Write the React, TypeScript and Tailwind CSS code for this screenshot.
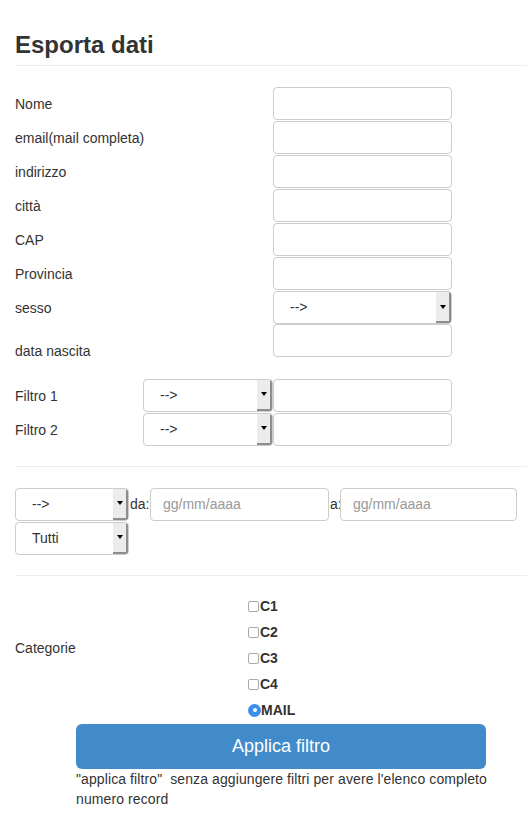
import React from "react";

const FIELDS = ["Nome", "email(mail completa)", "indirizzo", "città", "CAP", "Provincia"];
const CATEGORIES = ["C1", "C2", "C3", "C4"];

function FakeSelect({ label, className }: { label: string; className: string }) {
  return (
    <div
      className={`flex h-[33px] items-stretch justify-between overflow-hidden rounded-[4px] border border-[#ccc] bg-white ${className}`}
    >
      <span className="flex items-center pl-4 text-[14px] text-[#333]">{label}</span>
      <span className="flex w-[15px] items-center justify-center border-r-2 border-b-2 border-[#8d8d8d] bg-[#ececec]">
        <span className="h-0 w-0 border-l-[3px] border-r-[3px] border-t-[4px] border-l-transparent border-r-transparent border-t-black" />
      </span>
    </div>
  );
}

function TextBox({ className, placeholder }: { className: string; placeholder?: string }) {
  return (
    <div
      className={`flex h-[33px] items-center rounded-[4px] border border-[#ccc] bg-white pl-3 text-[14px] text-[#999] ${className}`}
    >
      {placeholder}
    </div>
  );
}

export default function App() {
  return (
    <div
      className="min-h-[829px] bg-white pl-[15px] text-[14px] text-[#333]"
      style={{ fontFamily: "'Liberation Sans', Arial, sans-serif" }}
    >
      <h1 className="pt-[32px] text-[24px] font-bold leading-[26px] text-[#333]">Esporta dati</h1>
      <hr className="mt-[7px] border-t border-[#eee]" />

      <div className="mt-[20px] flex flex-col">
        {FIELDS.map((f) => (
          <div key={f} className="flex h-[34px] items-center pt-[1px]">
            <span className="w-[258px] pt-[2px]">{f}</span>
            <TextBox className="w-[179px]" />
          </div>
        ))}
        <div className="flex h-[34px] items-center pt-[1px]">
          <span className="w-[258px] pt-[2px]">sesso</span>
          <FakeSelect label="-->" className="w-[179px]" />
        </div>
        <div className="flex h-[34px] items-start">
          <span className="w-[258px] pt-[17px] leading-[20px]">data nascita</span>
          <TextBox className="w-[179px]" />
        </div>
      </div>

      <div className="mt-[20px] flex flex-col">
        {["Filtro 1", "Filtro 2"].map((f) => (
          <div key={f} className="flex h-[34px] items-center">
            <span className="w-[128px] pt-[2px]">{f}</span>
            <FakeSelect label="-->" className="w-[130px]" />
            <TextBox className="w-[179px]" />
          </div>
        ))}
      </div>

      <hr className="mt-[20px] border-t border-[#eee]" />

      <div className="mt-[20px] flex flex-col">
        <div className="flex h-[34px] items-center">
          <FakeSelect label="-->" className="w-[114px]" />
          <span className="w-[21px] pl-[1px]">da:</span>
          <TextBox className="w-[179px]" placeholder="gg/mm/aaaa" />
          <span className="w-[11px] pl-[1px]">a:</span>
          <TextBox className="w-[177px]" placeholder="gg/mm/aaaa" />
        </div>
        <div className="flex h-[34px] items-center">
          <FakeSelect label="Tutti" className="w-[114px]" />
        </div>
      </div>

      <hr className="mt-[20px] border-t border-[#eee]" />

      <div className="mt-[17px] flex">
        <span className="w-[233px] pt-[45px] leading-[20px]">Categorie</span>
        <div className="flex flex-col">
          {CATEGORIES.map((c) => (
            <div key={c} className="flex h-[26px] items-center">
              <span className="mr-[1px] h-[11px] w-[11px] rounded-[2px] border border-[#a9a9a9] bg-white" />
              <span className="font-bold">{c}</span>
            </div>
          ))}
          <div className="flex h-[26px] items-center">
            <span className="flex h-[13px] w-[13px] items-center justify-center rounded-full bg-[#3b8eea]">
              <span className="h-[4px] w-[4px] rounded-full bg-white" />
            </span>
            <span className="font-bold">MAIL</span>
          </div>
        </div>
      </div>

      <div className="ml-[61px] w-[420px]">
        <button className="mt-[1px] flex h-[45px] w-[410px] items-center justify-center rounded-[6px] bg-[#428bca] text-[18px] text-white">
          Applica filtro
        </button>
        <p className="leading-[20px] tracking-[0.1px]">
          "applica filtro"&nbsp; senza aggiungere filtri per avere l'elenco completo
          <br />
          numero record
        </p>
      </div>
    </div>
  );
}
